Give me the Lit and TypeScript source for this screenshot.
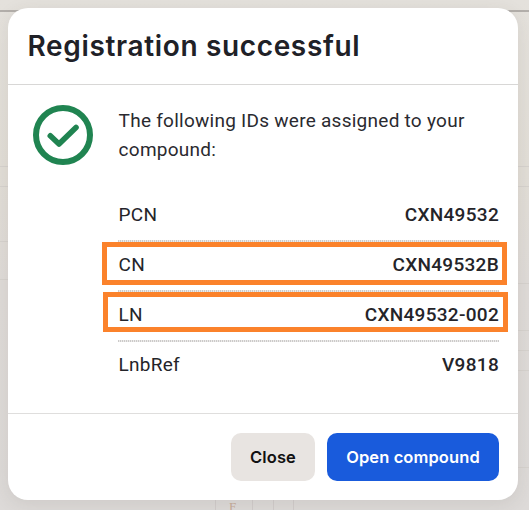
import { LitElement, html, css, svg } from "lit";
import { customElement, property } from "lit/decorators.js";
import { classMap } from "lit/directives/class-map.js";

interface IdEntry {
  label: string;
  value: string;
  highlight?: "cn" | "ln";
}

const entries: IdEntry[] = [
  { label: "PCN", value: "CXN49532" },
  { label: "CN", value: "CXN49532B", highlight: "cn" },
  { label: "LN", value: "CXN49532-002", highlight: "ln" },
  { label: "LnbRef", value: "V9818" },
];

@customElement("id-row")
class IdRow extends LitElement {
  @property() label = "";
  @property() value = "";
  @property() highlight = "";

  static styles = css`
    :host {
      display: flex;
      position: relative;
      box-sizing: border-box;
      height: 50px;
      padding: 0 0 5px 0.6px;
      align-items: center;
      justify-content: space-between;
      background: repeating-linear-gradient(90deg, #cccac9 0 1px, #ecebea 1px 2px) 0 100% / 100% 2px no-repeat;
      font: 400 19px/28px Roboto, sans-serif;
      letter-spacing: 0.25px;
      color: #242429;
    }
    :host(:last-of-type) {
      background: none;
    }
    .value {
      font-weight: 500;
      letter-spacing: 0.3px;
    }
    .mark {
      position: absolute;
      box-sizing: border-box;
      border: 5px solid #fb822b;
      width: 405px;
    }
    .cn {
      left: -16px;
      top: 0;
      height: 43px;
    }
    .ln {
      left: -15px;
      top: 0;
      height: 40px;
    }
  `;

  render() {
    const mark = { mark: true, cn: this.highlight === "cn", ln: this.highlight === "ln" };
    return html`
      <span class="label">${this.label}</span>
      <span class="value">${this.value}</span>
      ${this.highlight ? html`<div class=${classMap(mark)}></div>` : null}
    `;
  }
}

@customElement("app-root")
class AppRoot extends LitElement {
  static styles = css`
    :host {
      display: block;
      position: relative;
      isolation: isolate;
      box-sizing: border-box;
      width: 529px;
      height: 510px;
      padding: 8px 11px 10px 8px;
      overflow: hidden;
      background: linear-gradient(#e4e1dc 0, #e2ded7 170px, #dfdbd8 285px, #dddad8 100%);
      font-family: Roboto, sans-serif;
    }
    .backdrop {
      position: absolute;
      z-index: -1;
      inset: 0;
      width: 529px;
      height: 510px;
    }
    .dialog {
      position: relative;
      box-sizing: border-box;
      display: flex;
      flex-direction: column;
      height: 492px;
      border-radius: 20px;
      background: #fff;
      box-shadow: 0 4px 18px rgba(70, 55, 50, 0.1);
    }
    header {
      box-sizing: border-box;
      height: 77px;
      padding: 0 19.5px;
      border-bottom: 1px solid #d8d7d6;
    }
    h1 {
      margin: 0;
      font: 600 28px/76px Inter, sans-serif;
      letter-spacing: 0.65px;
      color: #202127;
      white-space: nowrap;
    }
    .body {
      display: flex;
      flex: 1;
      padding: 20px 19px 0 25px;
      gap: 25px;
    }
    .check {
      flex: none;
      width: 60px;
      height: 60px;
    }
    .content {
      flex: 1;
    }
    p {
      margin: 1px 0 28px;
      padding-left: 0.6px;
      font: 400 19px/29px Roboto, sans-serif;
      letter-spacing: 0.26px;
      color: #2a2a2f;
    }
    footer {
      box-sizing: border-box;
      display: flex;
      justify-content: flex-end;
      height: 87px;
      padding: 19px 19px 0;
      gap: 12px;
      border-top: 1px solid #dfdedd;
    }
    button {
      height: 48px;
      padding: 0;
      border: 0;
      border-radius: 10px;
      font: 600 16.5px/48px Inter, sans-serif;
      letter-spacing: 0.1px;
    }
    .close {
      width: 84px;
      background: #e8e4e1;
      color: #111;
    }
    .open {
      width: 172px;
      background: #195bdc;
      color: #fff;
    }
  `;

  private backdrop() {
    return svg`
      <path d="M0 11H529" stroke="#b3afab" stroke-width="2" />
      <path d="M0 166.5H8M0 186.5H8M0 241.5H8M0 279.5H8M518 166.5H529M518 186.5H529M518 283.5H529M518 330.5H529M518 350.5H529M518 370.5H529M518 467.5H529" stroke="#d6d2ce" />
      <path d="M215.5 500V510M252.5 500V510M273.5 500V510M293.5 500V510" stroke="#d1cccb" />
      <text x="229" y="511" font-family="Liberation Serif, serif" font-size="13" fill="#c7ab99">F</text>
    `;
  }

  render() {
    return html`
      <svg class="backdrop">${this.backdrop()}</svg>
      <div class="dialog">
        <header><h1>Registration successful</h1></header>
        <div class="body">
          <svg class="check" viewBox="0 0 60 60" fill="none" stroke="#208451">
            <circle cx="30" cy="30" r="27" stroke-width="6" />
            <path d="M17.3 30.8L26 39L43 22.5" stroke-width="5.6" stroke-linecap="round" stroke-linejoin="round" />
          </svg>
          <div class="content">
            <p>The following IDs were assigned to your compound:</p>
            ${entries.map(
              (e) => html`<id-row .label=${e.label} .value=${e.value} .highlight=${e.highlight ?? ""}></id-row>`
            )}
          </div>
        </div>
        <footer>
          <button class="close">Close</button>
          <button class="open">Open compound</button>
        </footer>
      </div>
    `;
  }
}
